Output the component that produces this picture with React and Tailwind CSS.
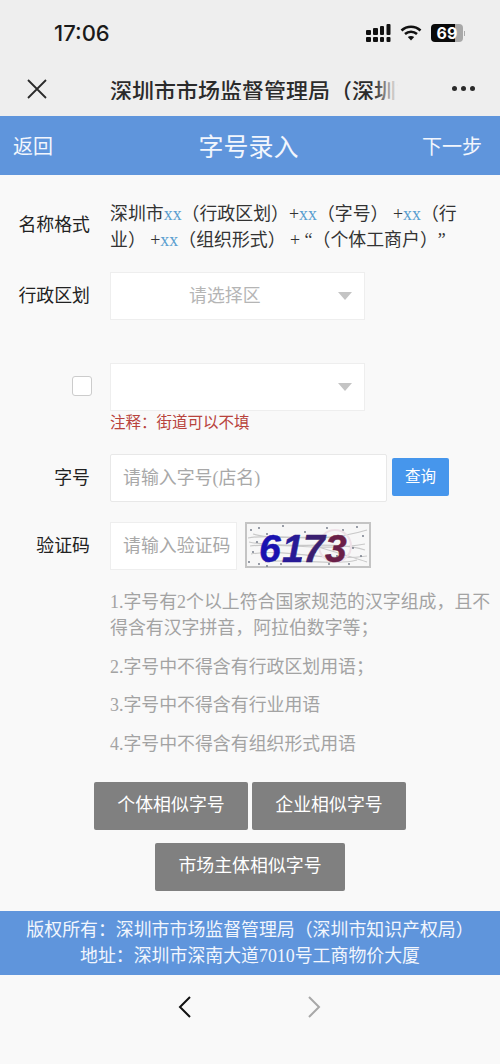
import React from "react";

const cjk = "font-['Liberation_Serif','Noto_Sans_CJK_SC',serif]";

function Xx() {
  return <span className="text-[#5b9fd0]">xx</span>;
}

function Arrow() {
  return <span className="w-0 h-0 border-x-[7.5px] border-x-transparent border-t-[8px] border-t-[#c4c4c4]" />;
}

function Field({ label, children, className = "", labelPad = "pb-[3px]" }) {
  return (
    <div className={`flex ${className}`}>
      <div className={`w-[90px] shrink-0 flex justify-end items-center text-[17.9px] text-[#222] font-['Noto_Sans_CJK_SC',sans-serif] leading-none ${labelPad}`}>{label}</div>
      <div className="ml-[20px] flex-1 flex items-center">{children}</div>
    </div>
  );
}

function Select({ text }) {
  return (
    <div className="w-[255px] h-[48px] bg-white border border-[#eeeeee] flex items-center pl-[78px] pr-[12px]">
      <div className="text-[17.9px] text-[#b5b5b5]">{text}</div>
      <div className="ml-auto flex items-center"><Arrow /></div>
    </div>
  );
}

function GreyBtn({ children, w }) {
  return (
    <div className={`${w} h-[48px] bg-[#808080] rounded-[2px] flex items-center justify-center text-white text-[17.9px] pb-[4px] font-['Noto_Sans_CJK_SC',sans-serif]`}>{children}</div>
  );
}

function Captcha() {
  const noise = [
    [6, 8], [14, 6], [22, 12], [38, 4], [60, 10], [82, 6], [98, 8], [112, 5], [118, 14], [8, 30], [4, 40], [30, 38], [76, 20], [108, 26], [116, 34], [14, 42], [22, 44], [56, 36], [92, 34], [84, 42], [104, 42], [50, 16], [70, 30], [100, 20], [12, 20], [36, 42],
  ];
  return (
    <svg width="126" height="46" viewBox="0 0 126 46" className="ml-[8px] mb-[2px] shrink-0">
      <rect x="0" y="0" width="126" height="46" fill="#f7f7f7" />
      <rect x="1" y="1" width="124" height="44" fill="none" stroke="#c4c4c4" strokeWidth="2" />
      <g stroke="#c9c9c9" strokeWidth="1.200" fill="none">
        <path d="M3 16 C30 10 70 24 122 8" />
        <path d="M5 24 C30 20 80 30 120 22" />
        <path d="M6 32 C40 26 80 40 122 34" />
        <path d="M20 40 C50 36 90 44 112 38" />
        <path d="M8 12 C30 18 60 14 100 16" />
        <path d="M4 20 C40 28 90 18 120 28" />
        <path d="M70 24 C90 30 110 36 122 40" />
      </g>
      {noise.map(([x, y], i) => (
        <circle key={i} cx={x} cy={y} r="0.9" fill="#6b7280" />
      ))}
      <circle cx="90" cy="24" r="16" fill="none" stroke="#eee0e7" strokeWidth="2" />
      <g fontFamily="'Liberation Sans', sans-serif" fontWeight="700" fontStyle="italic" fontSize="39">
        <text x="14" y="39.500" fill="#1a12b0" stroke="#1a12b0" strokeWidth="0.500">6</text>
        <text x="37" y="39.500" fill="#281a96" stroke="#281a96" strokeWidth="0.500">1</text>
        <text x="58" y="39.500" fill="#3a1f70" stroke="#3a1f70" strokeWidth="0.500">7</text>
        <text x="80" y="39.500" fill="#6a1f48" stroke="#6a1f48" strokeWidth="0.500">3</text>
      </g>
    </svg>
  );
}

export default function App() {
  return (
    <div className={`w-[500px] h-[1064px] bg-[#f9f9f9] flex flex-col overflow-hidden ${cjk}`}>
      <div className="h-[116px] bg-[#eeeeee] shrink-0 flex flex-col">
        <div className="h-[66px] flex items-center pl-[54px] pr-[35px] justify-between">
          <div className="text-[22px] font-medium text-[#1a1a1a] font-['Inter',sans-serif]">17:06</div>
          <div className="flex items-center">
            <svg width="25" height="18" viewBox="0 0 25 18" fill="#111">
              <rect x="0" y="6" width="5" height="5" rx="1" />
              <rect x="7" y="4" width="5" height="7" rx="1" />
              <rect x="14" y="2" width="4" height="9" rx="1" />
              <rect x="20.500" y="0" width="4" height="11" rx="1" />
              <rect x="0" y="13" width="5" height="5" rx="1" />
              <rect x="7" y="13" width="5" height="5" rx="1" />
              <rect x="14" y="13" width="4" height="5" rx="1" />
              <rect x="20.500" y="13" width="4" height="5" rx="1" />
            </svg>
            <svg width="22" height="16" viewBox="0 0 22 16" className="ml-[9px]" fill="none" stroke="#111" strokeWidth="2.600">
              <path d="M1.500 5.500 C7 0.500 15 0.500 20.500 5.500" />
              <path d="M5 9 C8.500 6 13.500 6 17 9" />
              <path d="M11 15.500 L7.800 12 C9.500 10.500 12.500 10.500 14.200 12 Z" fill="#111" stroke="none" />
            </svg>
            <div className="ml-[9px] w-[32px] h-[18px] rounded-[4px] bg-[linear-gradient(90deg,#0a0a0a_0,#0a0a0a_75%,#a8a8a8_75%,#a8a8a8_100%)] text-white text-[16px] font-bold flex items-center justify-center font-['Inter',sans-serif] leading-none">69</div>
            <div className="w-[1px] h-[5px] bg-[#aaa] ml-[1px]" />
          </div>
        </div>
        <div className="flex-1 flex items-center pb-[5px]">
          <svg width="20" height="20" viewBox="0 0 20 20" className="ml-[27px] shrink-0" stroke="#2a2a2a" strokeWidth="1.800" fill="none">
            <path d="M1 1 L19 19 M19 1 L1 19" />
          </svg>
          <div className="relative ml-[63px] w-[288px] overflow-hidden whitespace-nowrap text-[22px] leading-none font-medium text-[#2b2b2b] font-['Noto_Sans_CJK_SC',sans-serif]">
            深圳市市场监督管理局（深圳市市场
            <div className="absolute right-0 top-0 bottom-0 w-[24px] bg-gradient-to-r from-transparent to-[#eeeeee]" />
          </div>
          <div className="ml-auto mr-[25px] flex gap-[4px]">
            <span className="w-[5px] h-[5px] rounded-full bg-[#2a2a2a]" />
            <span className="w-[5px] h-[5px] rounded-full bg-[#2a2a2a]" />
            <span className="w-[5px] h-[5px] rounded-full bg-[#2a2a2a]" />
          </div>
        </div>
      </div>

      <div className="h-[59px] shrink-0 bg-[#5f95dc] flex items-center px-[13px] text-[#f2f6fd] font-['Noto_Sans_CJK_SC',sans-serif]">
        <span className="flex-1 text-[20px]">返回</span>
        <span className="text-[25px] pl-[2px]">字号录入</span>
        <span className="flex-1 text-right text-[20px] pr-[5px]">下一步</span>
      </div>

      <div className="flex-1 flex flex-col">
        <Field label="名称格式" className="mt-[26px]" labelPad="pb-[7px]">
          <p className="text-[17.9px] leading-[26px] text-[#333] w-[360px] [text-spacing-trim:space-all]">
            深圳市<Xx />（行政区划）+<Xx />（字号） +<Xx />（行业） +<Xx />（组织形式） + “（个体工商户）”
          </p>
        </Field>

        <Field label="行政区划" className="mt-[19px] h-[48px]">
          <Select text="请选择区" />
        </Field>

        <div className="flex mt-[43px] h-[48px]">
          <div className="w-[92px] shrink-0 flex justify-end items-center pb-[2px]">
            <span className="w-[20px] h-[20px] bg-white border border-[#cccccc] rounded-[3px]" />
          </div>
          <div className="ml-[18px]"><Select text="" /></div>
        </div>

        <div className="ml-[110px] mt-[1px] text-[15.500px] leading-[22px] text-[#b8433c]">注释：街道可以不填</div>

        <Field label="字号" className="mt-[20px] h-[48px]">
          <div className="w-[277px] h-[48px] bg-white border border-[#e8e8e8] rounded-[2px] flex items-center pl-[12px] text-[17.9px] text-[#a8a8a8]">请输入字号(店名)</div>
          <div className="ml-[5px] w-[57px] h-[38px] mb-[2px] bg-[#4696ec] rounded-[2px] flex items-center justify-center text-[15.500px] text-white">查询</div>
        </Field>

        <Field label="验证码" className="mt-[20px] h-[48px]">
          <div className="w-[127px] h-[48px] bg-white border border-[#eeeeee] flex items-center pl-[12px] text-[17.9px] text-[#a8a8a8] whitespace-nowrap">请输入验证码</div>
          <Captcha />
        </Field>

        <div className="ml-[110px] mr-[8px] mt-[19px] text-[17.9px] text-[#a3a3a3] leading-[26px] flex flex-col gap-[12.500px]">
          <p>1.字号有2个以上符合国家规范的汉字组成，且不得含有汉字拼音，阿拉伯数字等；</p>
          <p>2.字号中不得含有行政区划用语；</p>
          <p>3.字号中不得含有行业用语</p>
          <p>4.字号中不得含有组织形式用语</p>
        </div>

        <div className="mt-[25px] flex justify-center gap-[4px]">
          <GreyBtn w="w-[154px]">个体相似字号</GreyBtn>
          <GreyBtn w="w-[154px]">企业相似字号</GreyBtn>
        </div>
        <div className="mt-[13px] flex justify-center">
          <GreyBtn w="w-[190px]">市场主体相似字号</GreyBtn>
        </div>

        <div className="mt-[20px] h-[64px] shrink-0 bg-[#5f95dc] text-[#f2f6fd] text-[17.9px] leading-[26px] flex flex-col items-center justify-center whitespace-nowrap pt-[1px]">
          <div>版权所有：深圳市市场监督管理局（深圳市知识产权局）</div>
          <div>地址：深圳市深南大道7010号工商物价大厦</div>
        </div>

        <div className="flex-1 flex items-start pt-[20px]">
          <svg width="14" height="24" viewBox="0 0 14 24" className="ml-[178px]" fill="none" stroke="#111" strokeWidth="2">
            <path d="M12 2 L2 12 L12 22" />
          </svg>
          <svg width="14" height="24" viewBox="0 0 14 24" className="ml-[115px]" fill="none" stroke="#a8a8a8" strokeWidth="2">
            <path d="M2 2 L12 12 L2 22" />
          </svg>
        </div>
      </div>
    </div>
  );
}
